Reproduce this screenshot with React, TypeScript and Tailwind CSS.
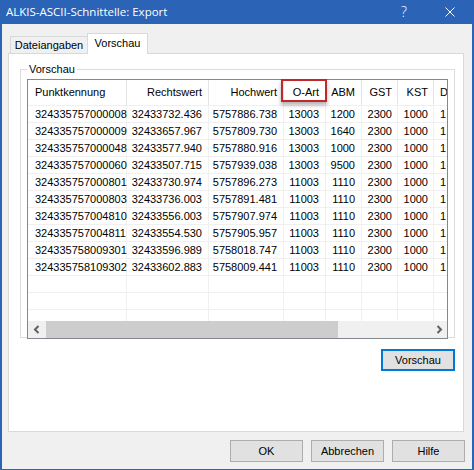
import React from 'react';

const rows = [
    ['324335757000008', '32433732.436', '5757886.738', '13003', '1200', '2300', '1000', '1'],
    ['324335757000009', '32433657.967', '5757809.730', '13003', '1640', '2300', '1000', '1'],
    ['324335757000048', '32433577.940', '5757880.916', '13003', '1000', '2300', '1000', '1'],
    ['324335757000060', '32433507.715', '5757939.038', '13003', '9500', '2300', '1000', '1'],
    ['324335757000801', '32433730.974', '5757896.273', '11003', '1110', '2300', '1000', '1'],
    ['324335757000803', '32433736.003', '5757891.481', '11003', '1110', '2300', '1000', '1'],
    ['324335757004810', '32433556.003', '5757907.974', '11003', '1110', '2300', '1000', '1'],
    ['324335757004811', '32433554.530', '5757905.957', '11003', '1110', '2300', '1000', '1'],
    ['324335758009301', '32433596.989', '5758018.747', '11003', '1110', '2300', '1000', '1'],
    ['324335758109302', '32433602.883', '5758009.441', '11003', '1110', '2300', '1000', '1'],
];

// widths and alignment per column (right border included in width)
const cols = [
    { label: 'Punktkennung', cls: 'w-[99px] justify-start pl-[7px]' },
    { label: 'Rechtswert', cls: 'w-[82px] justify-end pr-[6px]' },
    { label: 'Hochwert', cls: 'w-[75px] justify-end pr-[6px]' },
    { label: 'O-Art', cls: 'w-[42px] justify-end pr-[6px]' },
    { label: 'ABM', cls: 'w-[36px] justify-end pr-[6px]' },
    { label: 'GST', cls: 'w-[36px] justify-end pr-[5px]' },
    { label: 'KST', cls: 'w-[36px] justify-end pr-[5px]' },
    { label: 'DHK', cls: 'w-[60px] justify-start pl-[6px]' },
];

function Row({ cells }: { cells: string[] }) {
    return (
        <div className="flex h-[17px] shrink-0 border-t border-[#f0f0f0]">
            {cols.map((c, i) => (
                <div
                    key={i}
                    className={`flex shrink-0 items-center whitespace-nowrap border-r border-[#f0f0f0] ${c.cls}`}
                >
                    {cells[i]}
                </div>
            ))}
        </div>
    );
}

function ScrollArrow({ dir }: { dir: 'left' | 'right' }) {
    return (
        <svg width="8" height="9" viewBox="0 0 8 9">
            {dir === 'left' ? (
                <polyline points="5.5,1 2,4.5 5.5,8" fill="none" stroke="#606060" strokeWidth="2" />
            ) : (
                <polyline points="2.5,1 6,4.5 2.5,8" fill="none" stroke="#606060" strokeWidth="2" />
            )}
        </svg>
    );
}

function ListView() {
    return (
        <div className="relative">
            <div className="flex h-[260px] w-[421px] flex-col overflow-hidden border border-[#828790] bg-white">
                <div className="flex h-[25px] shrink-0">
                    {cols.map((c, i) => (
                        <div
                            key={i}
                            className={`flex shrink-0 items-center whitespace-nowrap border-r border-[#e5e5e5] ${c.cls}`}
                        >
                            {c.label}
                        </div>
                    ))}
                </div>
                <div className="flex min-h-0 flex-1 flex-col overflow-hidden">
                    {rows.map((r, i) => (
                        <Row key={i} cells={r} />
                    ))}
                    <Row cells={[]} />
                    <Row cells={[]} />
                    <Row cells={[]} />
                </div>
                <div className="flex h-[17px] shrink-0 bg-[#f0f0f0]">
                    <div className="flex w-[18px] items-center justify-center">
                        <ScrollArrow dir="left" />
                    </div>
                    <div className="w-[292px] bg-[#cdcdcd]" />
                    <div className="flex-1" />
                    <div className="flex w-[17px] items-center justify-center">
                        <ScrollArrow dir="right" />
                    </div>
                </div>
            </div>
            {/* red highlight around the O-Art header */}
            <div className="absolute left-[254px] top-0 h-[23px] w-[46px] border-2 border-[#c1272d] shadow-[0_3px_4px_rgba(0,0,0,0.3)]" />
        </div>
    );
}

export default function App() {
    return (
        <div className="flex h-[470px] w-[474px] flex-col border-x-2 border-b border-[#2b63b6] bg-[#f0f0f0] font-['Liberation_Sans',Arial,sans-serif] text-[11px] text-black">
            <div className="-mx-[2px] flex h-[24px] shrink-0 items-center bg-[#2b63b6] pl-[6px] font-['Open_Sans',sans-serif] text-[11.5px] text-white">
                <span className="flex-1">ALKIS-ASCII-Schnittelle: Export</span>
                <span className="mr-[38px] text-[14px] font-light leading-none">?</span>
                <svg width="10" height="10" viewBox="0 0 10 10" className="mr-[19px]">
                    <path d="M0.5 0.5 L9.5 9.5 M9.5 0.5 L0.5 9.5" stroke="white" strokeWidth="1" />
                </svg>
            </div>

            <div className="flex flex-1 flex-col pt-[9px]">
                <div className="pl-[6px] pr-[8px]">
                    <div className="flex h-[20px] items-end pl-[2px]">
                        <div className="flex h-[17px] w-[78px] items-center justify-center border border-b-0 border-[#d9d9d9] bg-[#f0f0f0]">
                            Dateiangaben
                        </div>
                        <div className="relative z-10 -mb-px -ml-px flex h-[21px] w-[61px] items-center justify-center border border-b-0 border-[#d9d9d9] bg-white pb-[2px]">
                            Vorschau
                        </div>
                    </div>

                    <div className="flex h-[379px] flex-col border border-[#d9d9d9] bg-white pl-[11px] pr-[8px] pt-[15px]">
                        <div className="relative h-[269px] border border-[#dcdcdc] px-[6px] pt-[9px]">
                            <span className="absolute -top-[7px] left-[6px] bg-white px-[2px] leading-[13px]">
                                Vorschau
                            </span>
                            <ListView />
                        </div>
                        <button className="mt-[11px] flex h-[22px] w-[74px] items-center justify-center self-end border-2 border-[#0078d7] bg-[#e1e1e1]">
                            Vorschau
                        </button>
                    </div>
                </div>

                <div className="mt-[8px] flex justify-end gap-[8px] pr-[7px]">
                    <button className="flex h-[22px] w-[73px] items-center justify-center border border-[#adadad] bg-[#e1e1e1]">
                        OK
                    </button>
                    <button className="flex h-[22px] w-[73px] items-center justify-center border border-[#adadad] bg-[#e1e1e1]">
                        Abbrechen
                    </button>
                    <button className="flex h-[22px] w-[73px] items-center justify-center border border-[#adadad] bg-[#e1e1e1]">
                        Hilfe
                    </button>
                </div>
            </div>
        </div>
    );
}
